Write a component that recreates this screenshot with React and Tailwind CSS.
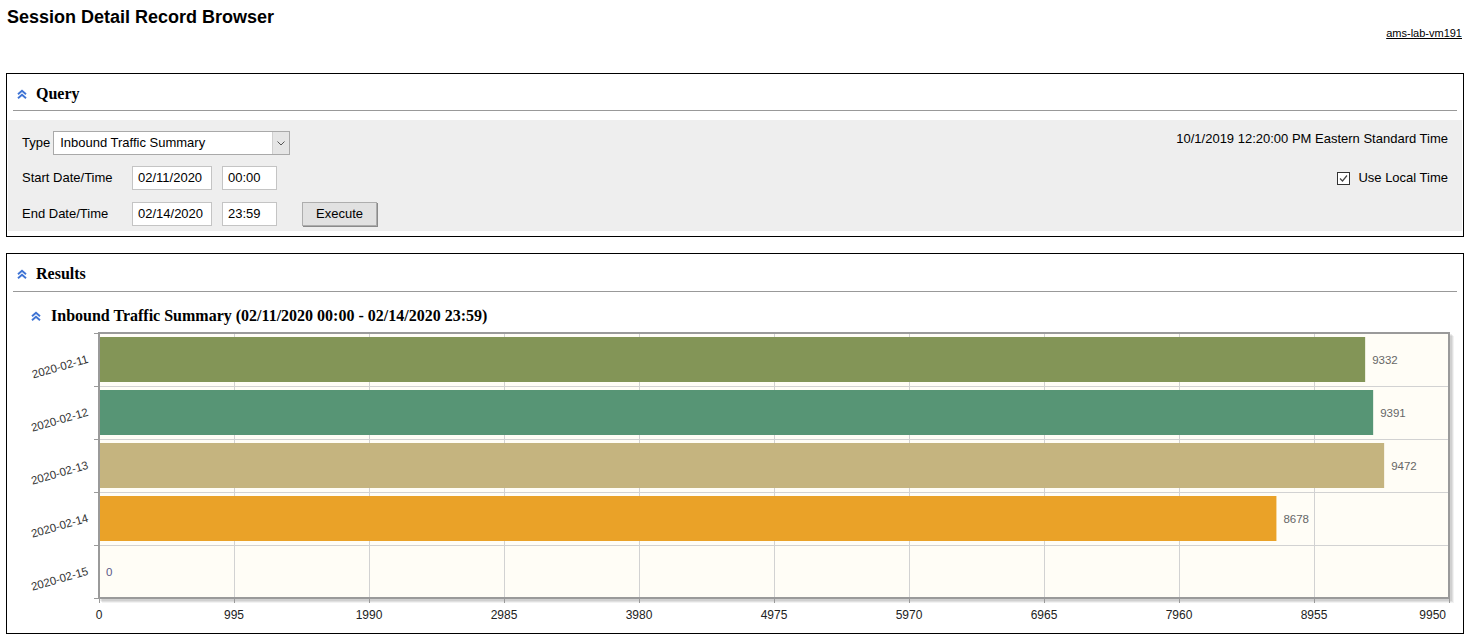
import React from "react";

const data = [
  { day: "2020-02-11", value: 9332, color: "#839557" },
  { day: "2020-02-12", value: 9391, color: "#579575" },
  { day: "2020-02-13", value: 9472, color: "#c5b47f" },
  { day: "2020-02-14", value: 8678, color: "#eaa228" },
  { day: "2020-02-15", value: 0, color: "#4bb2c5" },
];

const MAX = 9950;
const PX = 92; // plot left
const PY = 5; // plot top
const PW = 1350;
const ROW = 53;
const PH = ROW * data.length;
const font = "'Liberation Sans', Arial, sans-serif";

function Chevrons() {
  return (
    <svg width="10" height="10" viewBox="0 0 10 10" className="shrink-0">
      <path d="M1 5.2 L5 1.8 L9 5.2 M1 9.2 L5 5.8 L9 9.2" fill="none" stroke="#3f74d4" strokeWidth="1.9" />
    </svg>
  );
}

function Chart() {
  const ticks = Array.from({ length: 11 }, (_, i) => i);
  return (
    <svg width="1456" height="305" className="block" style={{ fontFamily: font }}>
      {/* shadow */}
      <rect x={PX + 1} y={PY + 1} width={PW + 2} height={PH + 2} fill="#000" opacity="0.07" />
      <rect x={PX + 2} y={PY + 2} width={PW + 2} height={PH + 2} fill="#000" opacity="0.07" />
      <rect x={PX + 3} y={PY + 3} width={PW + 2} height={PH + 2} fill="#000" opacity="0.05" />
      <rect x={PX} y={PY} width={PW} height={PH} fill="#fffdf6" />

      {/* grid */}
      {ticks.slice(1, 10).map((i) => (
        <line key={i} x1={PX + i * 135 + 0.5} x2={PX + i * 135 + 0.5} y1={PY} y2={PY + PH} stroke="#d2d2d2" />
      ))}
      {data.slice(1).map((_, k) => (
        <line key={k} x1={PX} x2={PX + PW} y1={PY + (k + 1) * ROW + 0.5} y2={PY + (k + 1) * ROW + 0.5} stroke="#d2d2d2" />
      ))}

      {/* bars */}
      {data.map((d, k) => {
        const w = (d.value / MAX) * PW;
        const cy = PY + k * ROW + ROW / 2;
        return (
          <g key={d.day}>
            {w > 0 && <rect x={PX} y={PY + k * ROW + 4} width={w} height={45} fill={d.color} />}
            <text x={PX + w + 7} y={cy + 4} fontSize="11.5" fill={d.value ? "#666" : "#5a5a88"}>
              {d.value}
            </text>
            <text
              x={82}
              y={cy + 3}
              fontSize="11.5"
              fill="#333"
              textAnchor="end"
              transform={`rotate(-16 82 ${cy + 3})`}
            >
              {d.day}
            </text>
          </g>
        );
      })}

      {/* border */}
      <rect x={PX} y={PY} width={PW} height={PH} fill="none" stroke="#9a9a9a" strokeWidth="2" />

      {/* y ticks */}
      {Array.from({ length: data.length + 1 }, (_, k) => (
        <line key={k} x1={PX - 5} x2={PX} y1={PY + k * ROW + 0.5} y2={PY + k * ROW + 0.5} stroke="#9a9a9a" />
      ))}

      {/* x ticks and labels */}
      {ticks.map((i) => {
        const x = PX + i * 135;
        return (
          <g key={i}>
            <line x1={x + 0.5} x2={x + 0.5} y1={PY + PH} y2={PY + PH + 5} stroke="#9a9a9a" />
            <text
              x={i === 10 ? x - 3 : x}
              y={291}
              fontSize="12"
              fill="#222"
              textAnchor={i === 10 ? "end" : "middle"}
            >
              {i * 995}
            </text>
          </g>
        );
      })}
    </svg>
  );
}

function PanelHeader({ title, pt, pb }) {
  return (
    <div className={`mx-[6px] border-b border-[#999] ${pt} ${pb}`}>
      <div className="flex h-[20px] items-center pl-[4px]">
        <Chevrons />
        <span className="ml-[9px] font-['Liberation_Serif',serif] text-[16px] font-bold leading-[20px] text-black">
          {title}
        </span>
      </div>
    </div>
  );
}

function TextBox({ value, w }) {
  return (
    <div className={`flex h-[24px] items-center border border-[#c4c4c4] bg-white pl-[5px] ${w}`}>
      {value}
    </div>
  );
}

export default function App() {
  return (
    <div className="h-[644px] bg-white font-['Liberation_Sans',Arial,sans-serif] text-[13px] text-black">
      <div className="ml-[6px] mr-[8px]">
        <h1 className="pl-[1px] pt-[7px] text-[18px] font-bold leading-[21px]">Session Detail Record Browser</h1>
        <div className="-mt-[1px] flex justify-end pr-[2px]">
          <a href="#" className="text-[11px] leading-[13px] text-black underline">
            ams-lab-vm191
          </a>
        </div>

        {/* Query */}
        <div className="mt-[33px] border border-black">
          <PanelHeader title="Query" pt="pt-[10px]" pb="pb-[6px]" />
          <div className="mx-[1px] mt-[9px] flex h-[111px] justify-between bg-[#eeeeee]">
            <div className="flex flex-col pl-[14px] pt-[11px]">
              <div className="flex h-[24px] items-center">
                <span>Type</span>
                <div className="ml-[3px] flex h-[24px] w-[237px] items-center border border-[#a9a9a9] bg-white">
                  <span className="flex-1 pl-[6px]">Inbound Traffic Summary</span>
                  <div className="flex h-full w-[17px] items-center justify-center border-l border-[#cfcfcf] bg-[#e5e5e5]">
                    <svg width="8" height="5" viewBox="0 0 8 5">
                      <path d="M0.5 0.5 L4 4 L7.5 0.5" fill="none" stroke="#555" strokeWidth="1" />
                    </svg>
                  </div>
                </div>
              </div>
              <div className="mt-[11px] flex h-[24px] items-center">
                <span className="w-[110px]">Start Date/Time</span>
                <TextBox value="02/11/2020" w="w-[80px]" />
                <div className="ml-[10px]">
                  <TextBox value="00:00" w="w-[55px]" />
                </div>
              </div>
              <div className="mt-[12px] flex h-[24px] items-center">
                <span className="w-[110px]">End Date/Time</span>
                <TextBox value="02/14/2020" w="w-[80px]" />
                <div className="ml-[10px]">
                  <TextBox value="23:59" w="w-[55px]" />
                </div>
                <button className="ml-[25px] h-[24px] w-[75px] border border-[#adadad] bg-[#e1e1e1] shadow-[1px_1px_0_#8a8a8a]">
                  Execute
                </button>
              </div>
            </div>
            <div className="flex flex-col items-end pr-[14px] pt-[11px]">
              <div className="h-[16px] leading-[16px]">10/1/2019 12:20:00 PM Eastern Standard Time</div>
              <div className="mt-[23px] flex h-[16px] items-center">
                <div className="flex h-[13px] w-[13px] items-center justify-center border border-[#333] bg-white">
                  <svg width="11" height="11" viewBox="0 0 11 11">
                    <path d="M2 5.5 L4.5 8 L9 2.5" fill="none" stroke="#444" strokeWidth="1.2" />
                  </svg>
                </div>
                <span className="ml-[8px] leading-[16px]">Use Local Time</span>
              </div>
            </div>
          </div>
          <div className="h-[5px]" />
        </div>

        {/* Results */}
        <div className="mt-[16px] border border-black">
          <PanelHeader title="Results" pt="pt-[10px]" pb="pb-[7px]" />
          <div className="mt-[14px] flex h-[20px] items-center pl-[24px]">
            <Chevrons />
            <span className="ml-[10px] font-['Liberation_Serif',serif] text-[16px] font-bold leading-[20px]">
              Inbound Traffic Summary (02/11/2020 00:00 - 02/14/2020 23:59)
            </span>
          </div>
          <div className="mt-[2px]">
            <Chart />
          </div>
        </div>
      </div>
    </div>
  );
}
